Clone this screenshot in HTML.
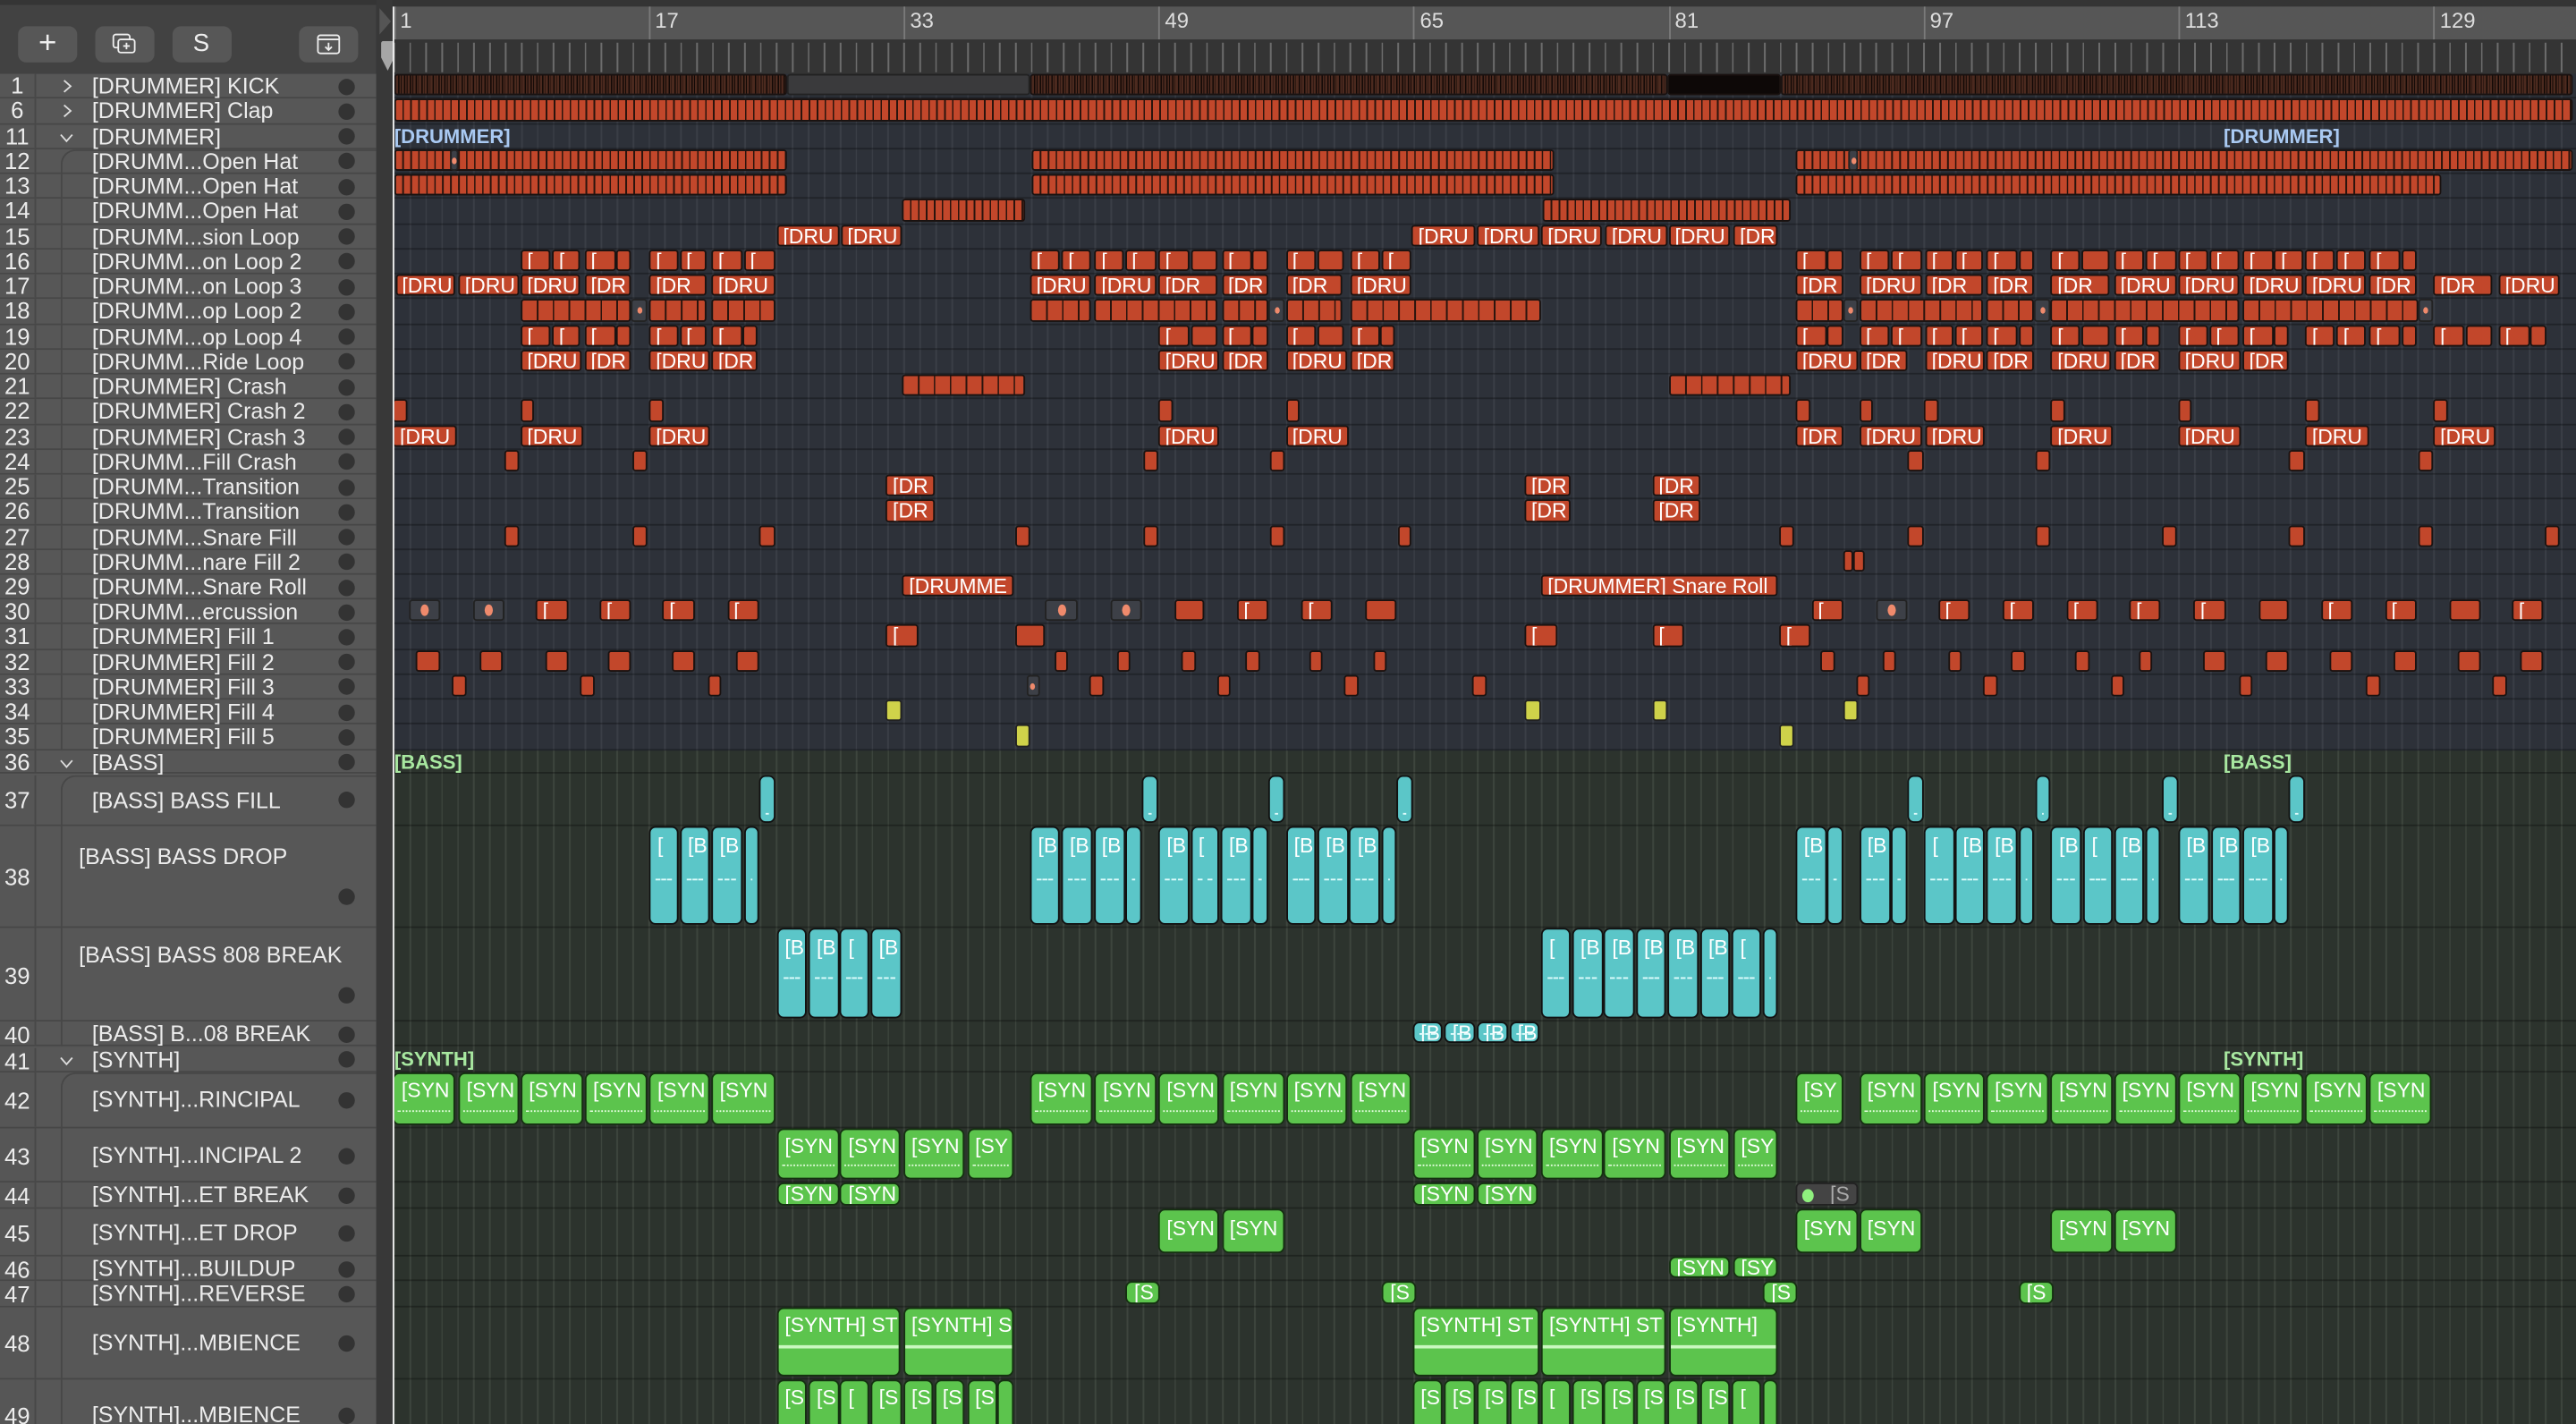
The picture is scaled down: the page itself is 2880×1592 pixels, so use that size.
<!DOCTYPE html>
<html><head><meta charset="utf-8"><style>
*{box-sizing:border-box;margin:0;padding:0}
html,body{width:2880px;height:1592px;overflow:hidden;background:#2d3139}
#s{position:absolute;left:0;top:0;width:1568px;height:867px;transform:scale(1.83673,1.83622);transform-origin:0 0;font-family:"Liberation Sans",sans-serif;overflow:hidden}
.abs{position:absolute}
#tb{left:0;top:0;width:229px;height:45px;background:#424242;border-top:3px solid #353535}
.bt{position:absolute;top:13px;height:22px;width:36px;background:#575757;border-radius:5px;color:#eee;text-align:center;font-size:15px;line-height:22px}
#hd{left:0;top:45px;width:229px;height:822px;background:#575757}
.h{position:absolute;left:0;width:229px;border-bottom:1px solid #474747;color:#ececec;font-size:13.6px;white-space:nowrap;background:#575757}
.h .n{position:absolute;left:0;top:0;bottom:0;width:22px;background:#565656;border-right:1px solid #474747;text-align:center;font-size:14px}
.h .t{position:absolute;left:56px;top:0}
.h .d{position:absolute;left:206px;width:10px;height:10px;border-radius:50%;background:#333}
.h .cv{position:absolute;left:36px;width:9px;height:9px}
.h.ch .box{position:absolute;left:37px;right:0;top:0;bottom:-1px;border-left:1px solid #474747}
.h.ch.f .box{border-top:1px solid #474747;border-top-left-radius:9px}
#strip{left:229px;top:0;width:10px;height:867px;background:#383838}
#rul{left:239px;top:0;width:1329px;height:45px;background:#343434}
#rn{left:0;top:4px;width:1329px;height:19.5px;background:#565656}
#rt{left:0;top:26px;width:1329px;height:17.5px;background:repeating-linear-gradient(90deg,#6c6c6c 0 1px,transparent 1px 9.7px);background-position:0.5px 0}
.bn{position:absolute;top:4px;height:19.5px;border-left:1px solid #7a7a7a;color:#ddd;font-size:13px;padding-left:3px;line-height:18px}
#ar{left:239px;top:45px;width:1329px;height:822px;overflow:hidden}
#gd{left:0;top:0;width:1329px;height:411.7px;background:repeating-linear-gradient(90deg,#3a3e46 0 1px,transparent 1px 9.7px) 0.5px 0,#2d3139}
#gg{left:0;top:411.7px;width:1329px;height:411px;background:repeating-linear-gradient(90deg,#3d453d 0 1px,transparent 1px 9.7px) 0.5px 0,#2c332d}
.r{position:absolute;left:0;width:1329px;border-bottom:1px solid rgba(0,0,0,.28)}
.r i{position:absolute;top:0;bottom:1px;font-style:normal;color:#fff;white-space:nowrap;overflow:hidden;font-size:12.5px;border:1px solid #1a1210;border-radius:2px;padding-left:2px}
.o{background:#c2472b;line-height:12px;padding-left:3px!important}
.os{background:repeating-linear-gradient(90deg,#c2472b 0 8.7px,#2a140d 8.7px 9.7px)}
.ss{background:repeating-linear-gradient(90deg,#c2472b 0 3.9px,#2a140d 3.9px 4.85px)}
.k{background:repeating-linear-gradient(90deg,#4c2a1f 0 1.4px,#120906 1.4px 2.2px,#4c2a1f 2.2px 3.1px,#120906 3.1px 3.5px)}
.gm{background:#3a3a3c;border-color:#222!important}
.gy{background:#3d4047;border-color:#222!important}
.gy:after{content:"";position:absolute;left:50%;top:50%;width:5px;height:7px;margin:-3.5px 0 0 -2.5px;border-radius:50%;background:#ef8a6c}
.gy.sm:after{width:3px;height:4px;margin:-2px 0 0 -1.5px}
.yl{background:#cfd24a;border-color:#222!important}
.c{background:#5bc6c8!important;border-radius:4px!important;border-color:#111!important;text-align:left;padding-left:4px!important;line-height:22px}
.c:after{content:"";position:absolute;left:3px;right:3px;top:55%;border-top:1.5px dashed #dffcfc}
.cs{line-height:14px}
.cs:after{top:auto;bottom:4px}
.g{background:#5cc44d!important;border-radius:4px!important;border-color:#143010!important;padding-left:4px!important;line-height:21px}
.g.w:after{content:"";position:absolute;left:2px;right:2px;bottom:7px;border-top:1px dotted #e6ffe0}
.g.a:after{content:"";position:absolute;left:0;right:0;top:56%;height:2px;background:#c9f7bf}
.fl{position:absolute;font-size:12px;font-weight:bold;line-height:15px}
</style></head><body><div id="s">

<div id="tb" class="abs">
<div class="bt" style="left:11px;width:36px;font-size:19px;font-weight:300">+</div>
<div class="bt" style="left:58px"><svg width="16" height="14" viewBox="0 0 16 14" style="margin-top:4px"><rect x="1" y="1" width="10" height="8" rx="1.5" fill="none" stroke="#eee" stroke-width="1"/><rect x="4" y="4" width="10" height="8" rx="1.5" fill="#575757" stroke="#eee" stroke-width="1"/><path d="M9 6v4M7 8h4" stroke="#eee" stroke-width="1"/></svg></div>
<div class="bt" style="left:104.5px;font-size:15px">S</div>
<div class="bt" style="left:182px"><svg width="16" height="14" viewBox="0 0 16 14" style="margin-top:4px"><rect x="1.5" y="1.5" width="13" height="11" rx="1.5" fill="none" stroke="#eee" stroke-width="1"/><path d="M1.5 4h13M8 6v4.5M6 8.5l2 2 2-2" stroke="#eee" stroke-width="1" fill="none"/></svg></div>
</div>

<div id="hd" class="abs"></div>

<div id="strip" class="abs"></div>
<svg class="abs" style="left:230px;top:5px" width="9" height="16"><path d="M1 0L8 8L1 16Z" fill="#555"/></svg>

<div id="rul" class="abs">
<div id="rn" class="abs"></div>
<div id="rt" class="abs"></div>
<div class="bn" style="left:0.5px">1</div>
<div class="bn" style="left:155.7px">17</div>
<div class="bn" style="left:310.9px">33</div>
<div class="bn" style="left:466.1px">49</div>
<div class="bn" style="left:621.3px">65</div>
<div class="bn" style="left:776.5px">81</div>
<div class="bn" style="left:931.7px">97</div>
<div class="bn" style="left:1086.9px">113</div>
<div class="bn" style="left:1242.1px">129</div>
</div>

<div id="ar" class="abs">
<div id="gd" class="abs"></div>
<div id="gg" class="abs"></div>
</div>

<!-- header rows -->
<div class="abs" style="left:0;top:0">
<div class="h" style="top:45.2px;height:15.24px;line-height:15px"><span class="n">1</span><svg class="cv" style="top:3px" viewBox="0 0 9 9"><path d="M3 1l4 3.5L3 8" fill="none" stroke="#ddd" stroke-width="1"/></svg><span class="t">[DRUMMER] KICK</span><span class="d" style="top:2.5px"></span></div>
<div class="h" style="top:60.44px;height:15.24px;line-height:15px"><span class="n">6</span><svg class="cv" style="top:3px" viewBox="0 0 9 9"><path d="M3 1l4 3.5L3 8" fill="none" stroke="#ddd" stroke-width="1"/></svg><span class="t">[DRUMMER] Clap</span><span class="d" style="top:2.5px"></span></div>
<div class="h" style="top:75.68px;height:15.24px;line-height:15px"><span class="n">11</span><svg class="cv" style="top:3px" viewBox="0 0 9 9"><path d="M1 3l3.5 4L8 3" fill="none" stroke="#ddd" stroke-width="1"/></svg><span class="t">[DRUMMER]</span><span class="d" style="top:2.5px"></span></div>
<div class="h ch f" style="top:90.92px;height:15.24px;line-height:15px"><span class="box"></span><span class="n">12</span><span class="t">[DRUMM...Open Hat</span><span class="d" style="top:2.5px"></span></div>
<div class="h ch" style="top:106.16px;height:15.24px;line-height:15px"><span class="box"></span><span class="n">13</span><span class="t">[DRUMM...Open Hat</span><span class="d" style="top:2.5px"></span></div>
<div class="h ch" style="top:121.4px;height:15.24px;line-height:15px"><span class="box"></span><span class="n">14</span><span class="t">[DRUMM...Open Hat</span><span class="d" style="top:2.5px"></span></div>
<div class="h ch" style="top:136.64px;height:15.24px;line-height:15px"><span class="box"></span><span class="n">15</span><span class="t">[DRUMM...sion Loop</span><span class="d" style="top:2.5px"></span></div>
<div class="h ch" style="top:151.88px;height:15.24px;line-height:15px"><span class="box"></span><span class="n">16</span><span class="t">[DRUMM...on Loop 2</span><span class="d" style="top:2.5px"></span></div>
<div class="h ch" style="top:167.12px;height:15.24px;line-height:15px"><span class="box"></span><span class="n">17</span><span class="t">[DRUMM...on Loop 3</span><span class="d" style="top:2.5px"></span></div>
<div class="h ch" style="top:182.36px;height:15.24px;line-height:15px"><span class="box"></span><span class="n">18</span><span class="t">[DRUMM...op Loop 2</span><span class="d" style="top:2.5px"></span></div>
<div class="h ch" style="top:197.6px;height:15.24px;line-height:15px"><span class="box"></span><span class="n">19</span><span class="t">[DRUMM...op Loop 4</span><span class="d" style="top:2.5px"></span></div>
<div class="h ch" style="top:212.84px;height:15.24px;line-height:15px"><span class="box"></span><span class="n">20</span><span class="t">[DRUMM...Ride Loop</span><span class="d" style="top:2.5px"></span></div>
<div class="h ch" style="top:228.08px;height:15.24px;line-height:15px"><span class="box"></span><span class="n">21</span><span class="t">[DRUMMER] Crash</span><span class="d" style="top:2.5px"></span></div>
<div class="h ch" style="top:243.32px;height:15.24px;line-height:15px"><span class="box"></span><span class="n">22</span><span class="t">[DRUMMER] Crash 2</span><span class="d" style="top:2.5px"></span></div>
<div class="h ch" style="top:258.56px;height:15.24px;line-height:15px"><span class="box"></span><span class="n">23</span><span class="t">[DRUMMER] Crash 3</span><span class="d" style="top:2.5px"></span></div>
<div class="h ch" style="top:273.8px;height:15.24px;line-height:15px"><span class="box"></span><span class="n">24</span><span class="t">[DRUMM...Fill Crash</span><span class="d" style="top:2.5px"></span></div>
<div class="h ch" style="top:289.04px;height:15.24px;line-height:15px"><span class="box"></span><span class="n">25</span><span class="t">[DRUMM...Transition</span><span class="d" style="top:2.5px"></span></div>
<div class="h ch" style="top:304.28px;height:15.24px;line-height:15px"><span class="box"></span><span class="n">26</span><span class="t">[DRUMM...Transition</span><span class="d" style="top:2.5px"></span></div>
<div class="h ch" style="top:319.52px;height:15.24px;line-height:15px"><span class="box"></span><span class="n">27</span><span class="t">[DRUMM...Snare Fill</span><span class="d" style="top:2.5px"></span></div>
<div class="h ch" style="top:334.76px;height:15.24px;line-height:15px"><span class="box"></span><span class="n">28</span><span class="t">[DRUMM...nare Fill 2</span><span class="d" style="top:2.5px"></span></div>
<div class="h ch" style="top:350px;height:15.24px;line-height:15px"><span class="box"></span><span class="n">29</span><span class="t">[DRUMM...Snare Roll</span><span class="d" style="top:2.5px"></span></div>
<div class="h ch" style="top:365.24px;height:15.24px;line-height:15px"><span class="box"></span><span class="n">30</span><span class="t">[DRUMM...ercussion</span><span class="d" style="top:2.5px"></span></div>
<div class="h ch" style="top:380.48px;height:15.24px;line-height:15px"><span class="box"></span><span class="n">31</span><span class="t">[DRUMMER] Fill 1</span><span class="d" style="top:2.5px"></span></div>
<div class="h ch" style="top:395.72px;height:15.24px;line-height:15px"><span class="box"></span><span class="n">32</span><span class="t">[DRUMMER] Fill 2</span><span class="d" style="top:2.5px"></span></div>
<div class="h ch" style="top:410.96px;height:15.24px;line-height:15px"><span class="box"></span><span class="n">33</span><span class="t">[DRUMMER] Fill 3</span><span class="d" style="top:2.5px"></span></div>
<div class="h ch" style="top:426.2px;height:15.24px;line-height:15px"><span class="box"></span><span class="n">34</span><span class="t">[DRUMMER] Fill 4</span><span class="d" style="top:2.5px"></span></div>
<div class="h ch" style="top:441.44px;height:15.24px;line-height:15px"><span class="box"></span><span class="n">35</span><span class="t">[DRUMMER] Fill 5</span><span class="d" style="top:2.5px"></span></div>
<div class="h" style="top:456.7px;height:14.8px;line-height:15px"><span class="n">36</span><svg class="cv" style="top:3px" viewBox="0 0 9 9"><path d="M1 3l3.5 4L8 3" fill="none" stroke="#ddd" stroke-width="1"/></svg><span class="t">[BASS]</span><span class="d" style="top:2.5px"></span></div>
<div class="h ch f" style="top:471.5px;height:31px;line-height:31px"><span class="box"></span><span class="n">37</span><span class="t">[BASS] BASS FILL</span><span class="d" style="top:10.5px"></span></div>
<div class="h ch" style="top:502.5px;height:62.1px;line-height:62px"><span class="box"></span><span class="n">38</span><span class="t" style="left:48px;top:11px;line-height:15px">[BASS] BASS DROP</span><span class="d" style="top:38px"></span></div>
<div class="h ch" style="top:564.6px;height:57.7px;line-height:58px"><span class="box"></span><span class="n">39</span><span class="t" style="left:48px;top:9px;line-height:15px">[BASS] BASS 808 BREAK</span><span class="d" style="top:36px"></span></div>
<div class="h ch" style="top:622.3px;height:15.2px;line-height:16px"><span class="box"></span><span class="n">40</span><span class="t">[BASS] B...08 BREAK</span><span class="d" style="top:2.5px"></span></div>
<div class="h" style="top:637.5px;height:15.5px;line-height:16px"><span class="n">41</span><svg class="cv" style="top:3px" viewBox="0 0 9 9"><path d="M1 3l3.5 4L8 3" fill="none" stroke="#ddd" stroke-width="1"/></svg><span class="t">[SYNTH]</span><span class="d" style="top:2.5px"></span></div>
<div class="h ch f" style="top:653px;height:33.5px;line-height:34px"><span class="box"></span><span class="n">42</span><span class="t">[SYNTH]...RINCIPAL</span><span class="d" style="top:12px"></span></div>
<div class="h ch" style="top:686.5px;height:33.5px;line-height:34px"><span class="box"></span><span class="n">43</span><span class="t">[SYNTH]...INCIPAL 2</span><span class="d" style="top:12px"></span></div>
<div class="h ch" style="top:720px;height:15.5px;line-height:16px"><span class="box"></span><span class="n">44</span><span class="t">[SYNTH]...ET BREAK</span><span class="d" style="top:3px"></span></div>
<div class="h ch" style="top:735.5px;height:29.5px;line-height:30px"><span class="box"></span><span class="n">45</span><span class="t">[SYNTH]...ET DROP</span><span class="d" style="top:10px"></span></div>
<div class="h ch" style="top:765px;height:15px;line-height:16px"><span class="box"></span><span class="n">46</span><span class="t">[SYNTH]...BUILDUP</span><span class="d" style="top:2.5px"></span></div>
<div class="h ch" style="top:780px;height:15.5px;line-height:16px"><span class="box"></span><span class="n">47</span><span class="t">[SYNTH]...REVERSE</span><span class="d" style="top:3px"></span></div>
<div class="h ch" style="top:795.5px;height:44px;line-height:44px"><span class="box"></span><span class="n">48</span><span class="t">[SYNTH]...MBIENCE</span><span class="d" style="top:17px"></span></div>
<div class="h ch" style="top:839.5px;height:45px;line-height:44px"><span class="box"></span><span class="n">49</span><span class="t">[SYNTH]...MBIENCE</span><span class="d" style="top:17px"></span></div>
</div>

<div class="abs" style="left:0;top:0;width:1568px">

<div class="r" style="top:45.2px;height:15.24px;left:239px"><i class="k" style="left:1px;width:239px"></i><i class="gm" style="left:240px;width:148px"></i><i class="k" style="left:388px;width:388px"></i><i style="left:776px;width:69px;background:#0d0807"></i><i class="k" style="left:845px;width:482px"></i></div>
<div class="r" style="top:60.44px;height:15.24px;left:239px"><i class="ss" style="left:1px;width:1326px"></i></div>
<div class="r" style="top:75.68px;height:15.24px;left:239px"><span class="fl" style="left:1px;color:#a9c9f2">[DRUMMER]</span><span class="fl" style="left:1114.5px;color:#a9c9f2">[DRUMMER]</span></div>
<div class="r" style="top:90.92px;height:15.24px;left:239px"><i class="ss" style="left:1px;width:239px"></i><i class="gy sm" style="left:35px;width:5px"></i><i class="ss" style="left:389px;width:318px"></i><i class="ss" style="left:854px;width:473px"></i><i class="gy sm" style="left:886px;width:6px"></i></div>
<div class="r" style="top:106.16px;height:15.24px;left:239px"><i class="ss" style="left:1px;width:239px"></i><i class="ss" style="left:389px;width:318px"></i><i class="ss" style="left:854px;width:393px"></i></div>
<div class="r" style="top:121.4px;height:15.24px;left:239px"><i class="ss" style="left:310.3px;width:74.5px"></i><i class="ss" style="left:699.9px;width:151px"></i></div>

<div class="r" style="top:136.64px;height:15.24px;left:239px">
<i class="o" style="left:233.6px;width:38px">[DRU</i><i class="o" style="left:272.8px;width:37.6px">[DRU</i>
<i class="o" style="left:620.3px;width:38.7px">[DRU</i><i class="o" style="left:660px;width:38px">[DRU</i><i class="o" style="left:699px;width:37px">[DRU</i><i class="o" style="left:738px;width:38px">[DRU</i><i class="o" style="left:776.5px;width:37.5px">[DRU</i><i class="o" style="left:816px;width:27px">[DR</i></div>

<div class="r" style="top:151.88px;height:15.24px;left:239px">
<i class="o" style="left:77.9px;width:18.5px">[</i><i class="o" style="left:97.2px;width:17.2px">[</i><i class="o" style="left:116.6px;width:19.4px">[</i><i class="o" style="left:136px;width:9.4px"></i><i class="o" style="left:156.2px;width:17.7px">[</i><i class="o" style="left:174.7px;width:16.8px">[</i><i class="o" style="left:194.1px;width:18.5px">[</i><i class="o" style="left:213.5px;width:19.3px">[</i>
<i class="o" style="left:387.8px;width:18.5px">[</i><i class="o" style="left:407.2px;width:17.6px">[</i><i class="o" style="left:427.4px;width:17.6px">[</i><i class="o" style="left:445.9px;width:19.4px">[</i><i class="o" style="left:466.2px;width:18.5px">[</i><i class="o" style="left:485.5px;width:16.4px"></i><i class="o" style="left:504.5px;width:18.1px">[</i><i class="o" style="left:523.4px;width:9.9px"></i><i class="o" style="left:543.6px;width:18.6px">[</i><i class="o" style="left:563px;width:15.5px"></i><i class="o" style="left:582.8px;width:18.1px">[</i><i class="o" style="left:601.8px;width:18.5px">[</i>
<i class="o" style="left:854px;width:18.5px">[</i><i class="o" style="left:873.4px;width:9.4px"></i><i class="o" style="left:892.7px;width:18.5px">[</i><i class="o" style="left:912.1px;width:19.4px">[</i><i class="o" style="left:932.8px;width:17.2px">[</i><i class="o" style="left:950.8px;width:17.2px">[</i><i class="o" style="left:970.2px;width:18.5px">[</i><i class="o" style="left:989.6px;width:9.4px"></i><i class="o" style="left:1009.4px;width:18.1px">[</i><i class="o" style="left:1028.3px;width:17.2px"></i><i class="o" style="left:1047.7px;width:18.5px">[</i><i class="o" style="left:1067.1px;width:18.5px">[</i><i class="o" style="left:1086.9px;width:18.1px">[</i><i class="o" style="left:1105.8px;width:18.5px">[</i><i class="o" style="left:1126px;width:18.6px">[</i><i class="o" style="left:1145.4px;width:17.6px">[</i><i class="o" style="left:1164.3px;width:18px">[</i><i class="o" style="left:1183.3px;width:18.1px">[</i><i class="o" style="left:1203.1px;width:18.9px">[</i><i class="o" style="left:1222.9px;width:9.6px"></i></div>

<div class="r" style="top:167.12px;height:15.24px;left:239px">
<i class="o" style="left:1.7px;width:36.5px">[DRU</i><i class="o" style="left:40px;width:37px">[DRU</i><i class="o" style="left:77.9px;width:36.5px">[DRU</i><i class="o" style="left:116.6px;width:28.8px">[DR</i><i class="o" style="left:156.2px;width:35.3px">[DR</i><i class="o" style="left:194.1px;width:38.7px">[DRU</i>
<i class="o" style="left:387.8px;width:37px">[DRU</i><i class="o" style="left:427.4px;width:37.9px">[DRU</i><i class="o" style="left:466.2px;width:35.7px">[DR</i><i class="o" style="left:504.5px;width:28.8px">[DR</i><i class="o" style="left:543.6px;width:34.9px">[DR</i><i class="o" style="left:582.8px;width:37.5px">[DRU</i>
<i class="o" style="left:854px;width:28.8px">[DR</i><i class="o" style="left:892.7px;width:38.8px">[DRU</i><i class="o" style="left:932.8px;width:35.2px">[DR</i><i class="o" style="left:970.2px;width:28.8px">[DR</i><i class="o" style="left:1009.4px;width:36.1px">[DR</i><i class="o" style="left:1047.7px;width:37.9px">[DRU</i><i class="o" style="left:1086.9px;width:37.4px">[DRU</i><i class="o" style="left:1126px;width:37px">[DRU</i><i class="o" style="left:1164.3px;width:37.1px">[DRU</i><i class="o" style="left:1203.1px;width:29.4px">[DR</i><i class="o" style="left:1242.3px;width:35.7px">[DR</i><i class="o" style="left:1281.8px;width:37.2px">[DRU</i></div>

<div class="r" style="top:182.36px;height:15.24px;left:239px">
<i class="os" style="left:77.9px;width:67.5px"></i><i class="gy sm" style="left:145.4px;width:10px"></i><i class="os" style="left:156.2px;width:35.3px"></i><i class="os" style="left:194.1px;width:38.7px"></i>
<i class="os" style="left:387.8px;width:37px"></i><i class="os" style="left:427.4px;width:74.5px"></i><i class="os" style="left:504.5px;width:28.8px"></i><i class="gy sm" style="left:533.3px;width:10px"></i><i class="os" style="left:543.6px;width:34.9px"></i><i class="os" style="left:582.8px;width:116.2px"></i>
<i class="os" style="left:854px;width:28.8px"></i><i class="gy sm" style="left:882.8px;width:9px"></i><i class="os" style="left:892.7px;width:75.3px"></i><i class="os" style="left:970.2px;width:28.8px"></i><i class="gy sm" style="left:999px;width:10px"></i><i class="os" style="left:1009.4px;width:114.9px"></i><i class="os" style="left:1126px;width:106.5px"></i><i class="gy sm" style="left:1232.5px;width:9.5px"></i></div>

<div class="r" style="top:197.6px;height:15.24px;left:239px">
<i class="o" style="left:77.9px;width:18.5px">[</i><i class="o" style="left:97.2px;width:17.2px">[</i><i class="o" style="left:116.6px;width:19.4px">[</i><i class="o" style="left:136px;width:9.4px"></i><i class="o" style="left:156.2px;width:17.7px">[</i><i class="o" style="left:174.7px;width:16.8px">[</i><i class="o" style="left:194.1px;width:18.5px">[</i><i class="o" style="left:212.6px;width:9.5px"></i>
<i class="o" style="left:466.2px;width:18.5px">[</i><i class="o" style="left:485.5px;width:16.4px"></i><i class="o" style="left:504.5px;width:18.1px">[</i><i class="o" style="left:523.4px;width:9.9px"></i><i class="o" style="left:543.6px;width:18.6px">[</i><i class="o" style="left:563px;width:15.5px"></i><i class="o" style="left:582.8px;width:18.1px">[</i><i class="o" style="left:600.9px;width:9.4px"></i>
<i class="o" style="left:854px;width:18.5px">[</i><i class="o" style="left:873.4px;width:9.4px"></i><i class="o" style="left:892.7px;width:18.5px">[</i><i class="o" style="left:912.1px;width:19.4px">[</i><i class="o" style="left:932.8px;width:17.2px">[</i><i class="o" style="left:950.8px;width:17.2px">[</i><i class="o" style="left:970.2px;width:18.5px">[</i><i class="o" style="left:989.6px;width:9.4px"></i><i class="o" style="left:1009.4px;width:18.1px">[</i><i class="o" style="left:1028.3px;width:17.2px"></i><i class="o" style="left:1047.7px;width:18.5px">[</i><i class="o" style="left:1067.1px;width:9.4px"></i><i class="o" style="left:1086.9px;width:18.1px">[</i><i class="o" style="left:1105.8px;width:18.5px">[</i><i class="o" style="left:1126px;width:18.6px">[</i><i class="o" style="left:1145.4px;width:8.6px"></i><i class="o" style="left:1164.3px;width:18px">[</i><i class="o" style="left:1183.3px;width:18.1px">[</i><i class="o" style="left:1203.1px;width:18.9px">[</i><i class="o" style="left:1222.9px;width:9.6px"></i><i class="o" style="left:1242.3px;width:18.5px">[</i><i class="o" style="left:1261.7px;width:16.3px"></i><i class="o" style="left:1281.8px;width:18.9px">[</i><i class="o" style="left:1300.7px;width:10px"></i></div>

<div class="r" style="top:212.84px;height:15.24px;left:239px">
<i class="o" style="left:77.9px;width:37.4px">[DRU</i><i class="o" style="left:116.6px;width:28.8px">[DR</i><i class="o" style="left:156.2px;width:36.6px">[DRU</i><i class="o" style="left:194.1px;width:28px">[DR</i>
<i class="o" style="left:466.2px;width:37px">[DRU</i><i class="o" style="left:504.5px;width:28.8px">[DR</i><i class="o" style="left:543.6px;width:37.1px">[DRU</i><i class="o" style="left:582.8px;width:27.5px">[DR</i>
<i class="o" style="left:854px;width:37.9px">[DRU</i><i class="o" style="left:892.7px;width:29.3px">[DR</i><i class="o" style="left:932.8px;width:36.6px">[DRU</i><i class="o" style="left:970.2px;width:28.8px">[DR</i><i class="o" style="left:1009.4px;width:37px">[DRU</i><i class="o" style="left:1047.7px;width:28.8px">[DR</i><i class="o" style="left:1086.9px;width:38.3px">[DRU</i><i class="o" style="left:1126px;width:28px">[DR</i></div>

<div class="r" style="top:228.08px;height:15.24px;left:239px"><i class="os" style="left:310.3px;width:74.5px"></i><i class="os" style="left:776.5px;width:74px"></i></div>

<div class="r" style="top:243.32px;height:15.24px;left:239px">
<i class="o" style="left:0.4px;width:8.6px"></i><i class="o" style="left:77.9px;width:8.6px"></i><i class="o" style="left:156.2px;width:8.6px"></i><i class="o" style="left:466.2px;width:8.6px"></i><i class="o" style="left:543.6px;width:8.6px"></i><i class="o" style="left:854px;width:8.6px"></i><i class="o" style="left:892.7px;width:8.6px"></i><i class="o" style="left:932.3px;width:8.7px"></i><i class="o" style="left:1009.4px;width:8.6px"></i><i class="o" style="left:1086.9px;width:8.6px"></i><i class="o" style="left:1164.3px;width:8.6px"></i><i class="o" style="left:1242.3px;width:8.7px"></i></div>

<div class="r" style="top:258.56px;height:15.24px;left:239px">
<i class="o" style="left:0.4px;width:38.6px">[DRU</i><i class="o" style="left:77.9px;width:37.8px">[DRU</i><i class="o" style="left:156.2px;width:37px">[DRU</i><i class="o" style="left:466.2px;width:37px">[DRU</i><i class="o" style="left:543.6px;width:38.4px">[DRU</i>
<i class="o" style="left:854px;width:28.8px">[DR</i><i class="o" style="left:892.7px;width:38.8px">[DRU</i><i class="o" style="left:932.8px;width:36.6px">[DRU</i><i class="o" style="left:1009.4px;width:37.4px">[DRU</i><i class="o" style="left:1086.9px;width:38.3px">[DRU</i><i class="o" style="left:1164.3px;width:38.4px">[DRU</i><i class="o" style="left:1242.3px;width:37.9px">[DRU</i></div>

<div class="r" style="top:273.8px;height:15.24px;left:239px">
<i class="o" style="left:68px;width:9px"></i><i class="o" style="left:145.9px;width:9.4px"></i><i class="o" style="left:456.7px;width:9px"></i><i class="o" style="left:534.2px;width:8.6px"></i><i class="o" style="left:922px;width:9.5px"></i><i class="o" style="left:999.5px;width:9.5px"></i><i class="o" style="left:1154px;width:9.5px"></i><i class="o" style="left:1232.8px;width:9.5px"></i></div>

<div class="r" style="top:289.04px;height:15.24px;left:239px"><i class="o" style="left:300.4px;width:29.3px">[DR</i><i class="o" style="left:689.1px;width:28.4px">[DR</i><i class="o" style="left:766.6px;width:29.3px">[DR</i></div>
<div class="r" style="top:304.28px;height:15.24px;left:239px"><i class="o" style="left:300.4px;width:29.3px">[DR</i><i class="o" style="left:689.1px;width:28.4px">[DR</i><i class="o" style="left:766.6px;width:29.3px">[DR</i></div>

<div class="r" style="top:319.52px;height:15.24px;left:239px">
<i class="o" style="left:68px;width:9px"></i><i class="o" style="left:145.9px;width:9.4px"></i><i class="o" style="left:223.4px;width:9.4px"></i><i class="o" style="left:379.2px;width:8.6px"></i><i class="o" style="left:456.7px;width:9px"></i><i class="o" style="left:534.2px;width:8.6px"></i><i class="o" style="left:611.7px;width:8.6px"></i><i class="o" style="left:844.1px;width:8.6px"></i><i class="o" style="left:922px;width:9.5px"></i><i class="o" style="left:999.5px;width:9.5px"></i><i class="o" style="left:1077px;width:9.4px"></i><i class="o" style="left:1154px;width:9.5px"></i><i class="o" style="left:1232.8px;width:9.5px"></i><i class="o" style="left:1309.5px;width:9.5px"></i></div>

<div class="r" style="top:334.76px;height:15.24px;left:239px"><i class="o" style="left:882.8px;width:6.4px"></i><i class="o" style="left:889.2px;width:7px"></i></div>

<div class="r" style="top:350px;height:15.24px;left:239px"><i class="o" style="left:310.3px;width:68px">[DRUMME</i><i class="o" style="left:699px;width:144.2px">[DRUMMER] Snare Roll</i></div>

<div class="r" style="top:365.24px;height:15.24px;left:239px">
<i class="gy" style="left:9.8px;width:19.4px"></i><i class="gy" style="left:49px;width:18.5px"></i><i class="o" style="left:87.3px;width:19.4px">[</i><i class="o" style="left:126.1px;width:19.3px">[</i><i class="o" style="left:164.4px;width:19.4px">[</i><i class="o" style="left:203.6px;width:19.3px">[</i>
<i class="gy" style="left:397.3px;width:19.5px"></i><i class="gy" style="left:436.5px;width:19.3px"></i><i class="o" style="left:475.6px;width:18.6px"></i><i class="o" style="left:514px;width:19.3px">[</i><i class="o" style="left:553.1px;width:19.4px">[</i><i class="o" style="left:592.3px;width:18.5px"></i>
<i class="o" style="left:863.5px;width:19.3px">[</i><i class="gy" style="left:902.6px;width:19.4px"></i><i class="o" style="left:940.9px;width:19.4px">[</i><i class="o" style="left:980.1px;width:19.4px">[</i><i class="o" style="left:1018.9px;width:19.4px">[</i><i class="o" style="left:1057.2px;width:19.3px">[</i><i class="o" style="left:1096.3px;width:19.4px">[</i><i class="o" style="left:1135.5px;width:18.5px"></i><i class="o" style="left:1173.9px;width:19.3px">[</i><i class="o" style="left:1212.6px;width:19.4px">[</i><i class="o" style="left:1252.2px;width:18.5px"></i><i class="o" style="left:1290.1px;width:19.4px">[</i></div>

<div class="r" style="top:380.48px;height:15.24px;left:239px"><i class="o" style="left:300.4px;width:19.4px">[</i><i class="o" style="left:379.2px;width:18.1px"></i><i class="o" style="left:689.1px;width:19.8px">[</i><i class="o" style="left:766.6px;width:19.4px">[</i><i class="o" style="left:844.1px;width:19.4px">[</i></div>

<div class="r" style="top:395.72px;height:15.24px;left:239px">
<i class="o" style="left:14.1px;width:15.1px"></i><i class="o" style="left:53.3px;width:14.2px"></i><i class="o" style="left:92.9px;width:13.8px"></i><i class="o" style="left:130.8px;width:14.6px"></i><i class="o" style="left:169.5px;width:14.3px"></i><i class="o" style="left:209.2px;width:13.7px"></i>
<i class="o" style="left:402.9px;width:8.6px"></i><i class="o" style="left:440.7px;width:8.7px"></i><i class="o" style="left:480.4px;width:8.6px"></i><i class="o" style="left:519.1px;width:8.6px"></i><i class="o" style="left:557.9px;width:8.6px"></i><i class="o" style="left:596.6px;width:8.6px"></i>
<i class="o" style="left:869px;width:8.7px"></i><i class="o" style="left:906.9px;width:8.6px"></i><i class="o" style="left:946.5px;width:8.6px"></i><i class="o" style="left:985.3px;width:8.6px"></i><i class="o" style="left:1024px;width:8.6px"></i><i class="o" style="left:1062.8px;width:8.6px"></i><i class="o" style="left:1101.5px;width:14.2px"></i><i class="o" style="left:1140.3px;width:13.7px"></i><i class="o" style="left:1179px;width:14.2px"></i><i class="o" style="left:1217.8px;width:14.2px"></i><i class="o" style="left:1256.5px;width:14.2px"></i><i class="o" style="left:1295.3px;width:14.2px"></i></div>

<div class="r" style="top:410.96px;height:15.24px;left:239px">
<i class="o" style="left:36.1px;width:8.6px"></i><i class="o" style="left:114.4px;width:8.6px"></i><i class="o" style="left:191.9px;width:8.6px"></i><i class="gy sm" style="left:385.7px;width:8.6px"></i><i class="o" style="left:424.4px;width:8.6px"></i><i class="o" style="left:501.9px;width:8.6px"></i><i class="o" style="left:579.4px;width:8.6px"></i><i class="o" style="left:656.9px;width:8.7px"></i><i class="o" style="left:890.6px;width:8.6px"></i><i class="o" style="left:968px;width:8.7px"></i><i class="o" style="left:1045.6px;width:8.6px"></i><i class="o" style="left:1123.9px;width:8.6px"></i><i class="o" style="left:1201.4px;width:8.6px"></i><i class="o" style="left:1278px;width:8.6px"></i></div>

<div class="r" style="top:426.2px;height:15.24px;left:239px"><i class="yl" style="left:300.4px;width:9.9px"></i><i class="yl" style="left:689.1px;width:9.9px"></i><i class="yl" style="left:766.6px;width:9.9px"></i><i class="yl" style="left:882.8px;width:9.1px"></i></div>
<div class="r" style="top:441.44px;height:15.24px;left:239px"><i class="yl" style="left:379.2px;width:8.6px"></i><i class="yl" style="left:844.1px;width:8.9px"></i></div>

<div class="r" style="top:456.7px;height:14.8px;left:239px"><span class="fl" style="left:1px;color:#a8e8a0">[BASS]</span><span class="fl" style="left:1114.5px;color:#a8e8a0">[BASS]</span></div>

<div class="r" style="top:471.5px;height:31px;left:239px">
<i class="c cs" style="left:223px;width:9.8px"></i><i class="c cs" style="left:455.8px;width:9.9px"></i><i class="c cs" style="left:533.3px;width:9.9px"></i><i class="c cs" style="left:610.8px;width:9.9px"></i><i class="c cs" style="left:922px;width:10px"></i><i class="c cs" style="left:999.5px;width:9.9px"></i><i class="c cs" style="left:1077px;width:10px"></i><i class="c cs" style="left:1154px;width:10px"></i></div>

<div class="r" style="top:502.5px;height:62.1px;left:239px">
<i class="c" style="left:156.2px;width:17.7px">[</i><i class="c" style="left:174.7px;width:18.5px">[B</i><i class="c" style="left:194.1px;width:18.5px">[B</i><i class="c" style="left:213.5px;width:9.4px"></i>
<i class="c" style="left:387.8px;width:18.5px">[B</i><i class="c" style="left:407.2px;width:18.5px">[B</i><i class="c" style="left:426.6px;width:19.4px">[B</i><i class="c" style="left:446px;width:9.8px"></i>
<i class="c" style="left:466.2px;width:18.5px">[B</i><i class="c" style="left:485.5px;width:17.7px">[</i><i class="c" style="left:504.1px;width:19.3px">[B</i><i class="c" style="left:523.4px;width:9.9px"></i>
<i class="c" style="left:543.6px;width:18.6px">[B</i><i class="c" style="left:563px;width:18.5px">[B</i><i class="c" style="left:582.4px;width:18.5px">[B</i><i class="c" style="left:601.8px;width:9px"></i>
<i class="c" style="left:854px;width:18.5px">[B</i><i class="c" style="left:873.4px;width:9.4px"></i><i class="c" style="left:892.7px;width:19.4px">[B</i><i class="c" style="left:912.1px;width:9.9px"></i>
<i class="c" style="left:932.3px;width:18.5px">[</i><i class="c" style="left:950.8px;width:18.6px">[B</i><i class="c" style="left:970.2px;width:18.5px">[B</i><i class="c" style="left:989.6px;width:9.9px"></i>
<i class="c" style="left:1009.4px;width:18.9px">[B</i><i class="c" style="left:1029.2px;width:17.6px">[</i><i class="c" style="left:1047.7px;width:18.5px">[B</i><i class="c" style="left:1067.1px;width:9.4px"></i>
<i class="c" style="left:1086.9px;width:18.9px">[B</i><i class="c" style="left:1106.7px;width:18.5px">[B</i><i class="c" style="left:1126px;width:18.6px">[B</i><i class="c" style="left:1145.4px;width:8.6px"></i></div>

<div class="r" style="top:564.6px;height:57.7px;left:239px">
<i class="c" style="left:233.7px;width:18.5px">[B</i><i class="c" style="left:253.1px;width:18.5px">[B</i><i class="c" style="left:272.4px;width:17.7px">[</i><i class="c" style="left:291px;width:18.5px">[B</i>
<i class="c" style="left:699px;width:18.1px">[</i><i class="c" style="left:718px;width:18.5px">[B</i><i class="c" style="left:737.3px;width:18.5px">[B</i><i class="c" style="left:756.7px;width:18.5px">[B</i><i class="c" style="left:776px;width:18.6px">[B</i><i class="c" style="left:795.9px;width:18.5px">[B</i><i class="c" style="left:815.2px;width:18.1px">[</i><i class="c" style="left:834.2px;width:9px"></i></div>

<div class="r" style="top:622.3px;height:15.2px;left:239px">
<i class="c cs" style="left:620.7px;width:18.5px;line-height:13px">[B</i><i class="c cs" style="left:640.1px;width:18.9px;line-height:13px">[B</i><i class="c cs" style="left:660px;width:18.6px;line-height:13px">[B</i><i class="c cs" style="left:679.8px;width:18.5px;line-height:13px">[B</i></div>

<div class="r" style="top:637.5px;height:15.5px;left:239px"><span class="fl" style="left:1px;color:#a8e8a0">[SYNTH]</span><span class="fl" style="left:1114.5px;color:#a8e8a0">[SYNTH]</span></div>

<div class="r" style="top:653px;height:33.5px;left:239px">
<i class="g w" style="left:0.4px;width:37.8px">[SYN</i><i class="g w" style="left:40px;width:37px">[SYN</i><i class="g w" style="left:77.9px;width:37.8px">[SYN</i><i class="g w" style="left:117px;width:37.9px">[SYN</i><i class="g w" style="left:156.2px;width:37px">[SYN</i><i class="g w" style="left:194.1px;width:38.7px">[SYN</i>
<i class="g w" style="left:387.8px;width:37.9px">[SYN</i><i class="g w" style="left:427.4px;width:37.9px">[SYN</i><i class="g w" style="left:466.2px;width:37px">[SYN</i><i class="g w" style="left:504.5px;width:38.3px">[SYN</i><i class="g w" style="left:543.6px;width:37.9px">[SYN</i><i class="g w" style="left:582.8px;width:37.5px">[SYN</i>
<i class="g w" style="left:854px;width:28.8px">[SY</i><i class="g w" style="left:892.7px;width:38.8px">[SYN</i><i class="g w" style="left:932.3px;width:37.1px">[SYN</i><i class="g w" style="left:970.2px;width:37.9px">[SYN</i><i class="g w" style="left:1009.4px;width:37.4px">[SYN</i><i class="g w" style="left:1047.7px;width:37.9px">[SYN</i><i class="g w" style="left:1086.9px;width:38.3px">[SYN</i><i class="g w" style="left:1126px;width:37px">[SYN</i><i class="g w" style="left:1164.3px;width:37.5px">[SYN</i><i class="g w" style="left:1203.1px;width:38.3px">[SYN</i></div>

<div class="r" style="top:686.5px;height:33.5px;left:239px">
<i class="g w" style="left:233.7px;width:37.9px">[SYN</i><i class="g w" style="left:272.4px;width:37.1px">[SYN</i><i class="g w" style="left:310.8px;width:37.4px">[SYN</i><i class="g w" style="left:349.5px;width:28.8px">[SY</i>
<i class="g w" style="left:620.7px;width:38.3px">[SYN</i><i class="g w" style="left:659.8px;width:37.5px">[SYN</i><i class="g w" style="left:699px;width:37.5px">[SYN</i><i class="g w" style="left:737.3px;width:37.9px">[SYN</i><i class="g w" style="left:776.5px;width:37.9px">[SYN</i><i class="g w" style="left:815.7px;width:27.5px">[SY</i></div>

<div class="r" style="top:720px;height:15.5px;left:239px">
<i class="g" style="left:233.7px;width:37.9px;line-height:13px">[SYN</i><i class="g" style="left:272.4px;width:37.1px;line-height:13px">[SYN</i><i class="g" style="left:620.7px;width:38.3px;line-height:13px">[SYN</i><i class="g" style="left:659.8px;width:37.5px;line-height:13px">[SYN</i>
<i class="gm" style="left:854px;width:38px;border-radius:3px;color:#aaa;padding-left:20px;line-height:13px;background:#444">[S</i></div>
<div class="abs" style="left:1097px;top:723.5px;width:7px;height:8px;border-radius:50%;background:#8ff07e"></div>

<div class="r" style="top:735.5px;height:29.5px;left:239px">
<i class="g" style="left:466.2px;width:37px;line-height:22px">[SYN</i><i class="g" style="left:504.5px;width:38.3px;line-height:22px">[SYN</i><i class="g" style="left:854px;width:38px;line-height:22px">[SYN</i><i class="g" style="left:892.7px;width:38.8px;line-height:22px">[SYN</i><i class="g" style="left:1009.4px;width:37.4px;line-height:22px">[SYN</i><i class="g" style="left:1047.7px;width:37.9px;line-height:22px">[SYN</i></div>

<div class="r" style="top:765px;height:15px;left:239px"><i class="g" style="left:776.5px;width:37.9px;line-height:13px">[SYN</i><i class="g" style="left:815.7px;width:27.5px;line-height:13px">[SY</i></div>

<div class="r" style="top:780px;height:15.5px;left:239px"><i class="g" style="left:446.4px;width:21px;line-height:13px">[S</i><i class="g" style="left:602.2px;width:21.1px;line-height:13px">[S</i><i class="g" style="left:834.2px;width:21.1px;line-height:13px">[S</i><i class="g" style="left:989.6px;width:21.1px;line-height:13px">[S</i></div>

<div class="r" style="top:795.5px;height:44px;left:239px">
<i class="g a" style="left:233.7px;width:75.8px">[SYNTH] ST</i><i class="g a" style="left:310.8px;width:67.5px">[SYNTH] S</i><i class="g a" style="left:620.7px;width:77.4px">[SYNTH] ST</i><i class="g a" style="left:699px;width:76.2px">[SYNTH] ST</i><i class="g a" style="left:776.5px;width:66.7px">[SYNTH]</i></div>

<div class="r" style="top:839.5px;height:45px;left:239px">
<i class="g" style="left:233.7px;width:18.5px">[S</i><i class="g" style="left:253.1px;width:18.5px">[S</i><i class="g" style="left:272.4px;width:17.7px">[</i><i class="g" style="left:291px;width:18.5px">[S</i><i class="g" style="left:310.8px;width:18px">[S</i><i class="g" style="left:329.7px;width:18.5px">[S</i><i class="g" style="left:349.5px;width:18.9px">[S</i><i class="g" style="left:368.4px;width:9.9px"></i>
<i class="g" style="left:620.7px;width:18.5px">[S</i><i class="g" style="left:640.1px;width:18.9px">[S</i><i class="g" style="left:659.8px;width:18.8px">[S</i><i class="g" style="left:679.6px;width:18.5px">[S</i><i class="g" style="left:699px;width:18.1px">[</i><i class="g" style="left:718px;width:18.5px">[S</i><i class="g" style="left:737.3px;width:18.5px">[S</i><i class="g" style="left:756.7px;width:18.5px">[S</i><i class="g" style="left:776px;width:18.6px">[S</i><i class="g" style="left:795.9px;width:18.5px">[S</i><i class="g" style="left:815.2px;width:18.1px">[</i><i class="g" style="left:834.2px;width:9px"></i></div>

</div>

<svg class="abs" style="left:231px;top:25px" width="10" height="19"><path d="M1 1.5Q1 0 2.5 0H7.5Q9 0 9 1.5V10L5 18L1 10Z" fill="#a6a6a6"/></svg>
<div class="abs" style="left:238.6px;top:4px;width:1px;height:863px;background:#f2f2f2"></div>

</div></body></html>
